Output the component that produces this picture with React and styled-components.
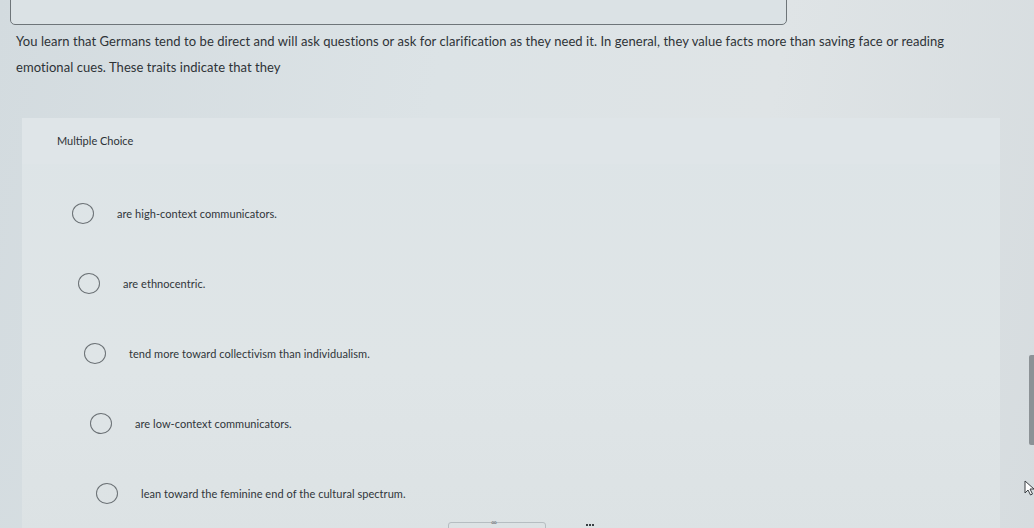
import React from "react";
import styled, { createGlobalStyle } from "styled-components";

const GlobalStyle = createGlobalStyle`
  html, body {
    margin: 0;
    padding: 0;
    height: 100%;
    overflow: hidden;
  }
  body {
    background: linear-gradient(100deg, #d3dbdf 0%, #dce3e6 40%, #dfe4e6 70%, #d6dcdf 100%);
    font-family: Lato, "Open Sans", sans-serif;
    color: #2b3034;
  }
`;

const Page = styled.div`
  position: relative;
  width: 1034px;
  height: 528px;
  overflow: hidden;
`;

const AnswerBox = styled.div`
  width: 775px;
  height: 40px;
  margin: -17px 0 0 10px;
  border: 1.5px solid #6e7579;
  border-radius: 5px;
  background: #dbe2e5;
`;

const Question = styled.p`
  width: 940px;
  margin: 3px 0 0 16px;
  font-size: 13px;
  line-height: 26px;
  letter-spacing: 0.06px;
  color: #2e3337;
`;

const Panel = styled.section`
  width: 978px;
  margin: 38px 0 0 22px;
  background: linear-gradient(180deg, #dde4e7 0%, #dfe5e7 60%, #dce2e4 100%);
  min-height: 420px;
`;

const PanelHeader = styled.div`
  padding: 16px 35px;
  font-size: 11px;
  line-height: 14px;
  color: #2d3236;
  background: #dfe5e8;
`;

const OptionList = styled.div`
  padding-top: 14px;
  display: flex;
  flex-direction: column;
`;

const Option = styled.label`
  height: 70px;
  display: flex;
  align-items: center;
  gap: 23px;
  padding-left: ${({ $indent }) => 50 + $indent}px;
  cursor: pointer;
`;

const Radio = styled.span`
  width: 20px;
  height: 19px;
  border: 1.6px solid #6b7175;
  border-radius: 50%;
  flex-shrink: 0;
`;

const OptionText = styled.span`
  font-size: 11px;
  letter-spacing: 0.05px;
  color: #30353a;
`;

const Scrollbar = styled.div`
  position: absolute;
  right: 0;
  top: 355px;
  width: 5px;
  height: 90px;
  background: #8c9296;
  border-radius: 2px 0 0 2px;
`;

const Cursor = styled.svg`
  position: absolute;
  left: 1024px;
  top: 480px;
`;

const BottomBar = styled.div`
  position: absolute;
  left: 448px;
  bottom: -8px;
  display: flex;
  align-items: flex-start;
  gap: 40px;
`;

const PagerBox = styled.div`
  position: relative;
  width: 96px;
  height: 12px;
  border: 1px solid #b6bdc1;
  border-radius: 3px;
`;

const LinkGlyph = styled.span`
  position: absolute;
  left: 42px;
  top: -6px;
  font-size: 8px;
  color: #7c8286;
`;

const GridGlyph = styled.span`
  margin-top: 2px;
  width: 8px;
  height: 4px;
  border-top: 2px dotted #3a3f43;
`;

const options = [
  "are high-context communicators.",
  "are ethnocentric.",
  "tend more toward collectivism than individualism.",
  "are low-context communicators.",
  "lean toward the feminine end of the cultural spectrum.",
];

const App = () => {
  return (
    <>
      <GlobalStyle />
      <Page>
        <AnswerBox />
        <Question>
          You learn that Germans tend to be direct and will ask questions or ask for
          clarification as they need it. In general, they value facts more than saving
          face or reading emotional cues. These traits indicate that they
        </Question>
        <Panel>
          <PanelHeader>Multiple Choice</PanelHeader>
          <OptionList>
            {options.map((text, i) => (
              <Option key={i} $indent={i * 6}>
                <Radio />
                <OptionText>{text}</OptionText>
              </Option>
            ))}
          </OptionList>
        </Panel>
        <Scrollbar />
        <Cursor width="12" height="16" viewBox="0 0 12 16">
          <path d="M1 1 L1 13 L4 10 L6.5 15 L8.5 14 L6 9 L10 9 Z" fill="#fff" stroke="#3a3f43" strokeWidth="1" />
        </Cursor>
        <BottomBar>
          <PagerBox>
            <LinkGlyph>∞</LinkGlyph>
          </PagerBox>
          <GridGlyph />
        </BottomBar>
      </Page>
    </>
  );
};

export default App;
